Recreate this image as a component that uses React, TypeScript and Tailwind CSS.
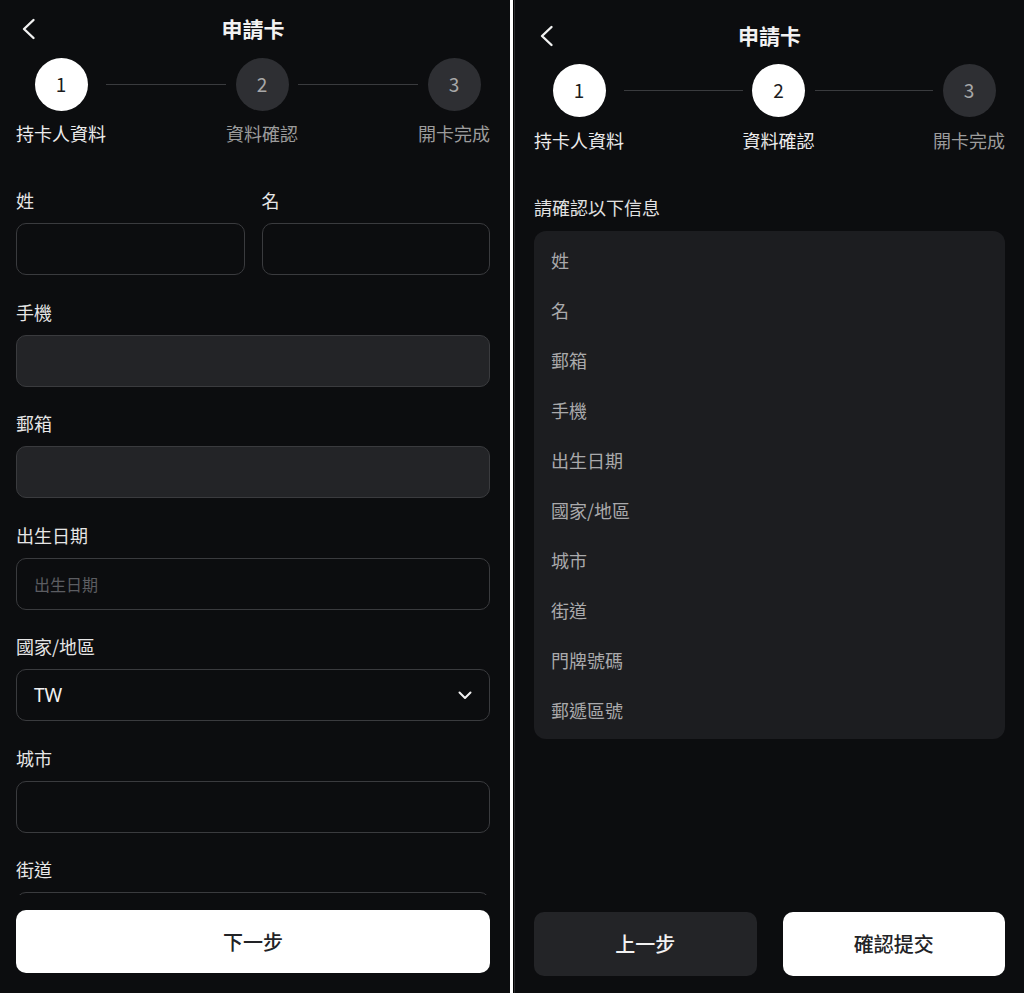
import React from "react";

const font = "font-['Noto_Sans_CJK_TC','Noto_Sans',sans-serif]";

type Step = { num: string; label: string; done: boolean };

function BackIcon() {
  return (
    <svg width="24" height="24" viewBox="0 0 24 24" fill="none">
      <polyline
        points="17.5,3 8,12 17.5,21"
        stroke="#f2f2f2"
        strokeWidth="2.4"
        strokeLinecap="round"
        strokeLinejoin="round"
      />
    </svg>
  );
}

function Header({ top }: { top: boolean }) {
  return (
    <div
      className={
        "grid grid-cols-[40px_1fr_40px] items-center " +
        (top ? "h-[58px]" : "mt-2 h-[56px]")
      }
    >
      <BackIcon />
      <h1 className="text-center text-[21px] font-bold text-[#f2f2f2]">申請卡</h1>
      <div />
    </div>
  );
}

function Stepper({ steps, labelGap }: { steps: Step[]; labelGap: string }) {
  return (
    <div className="flex items-start">
      {steps.map((s, i) => (
        <React.Fragment key={s.num}>
          {i > 0 && <div className="mt-[26px] h-px flex-1 bg-[#3a3b3e]" />}
          <div className="flex flex-col items-center">
            <div
              className={
                "flex h-[53px] w-[53px] items-center justify-center rounded-full text-[19px] " +
                (s.done ? "bg-white text-[#1c1c1e]" : "bg-[#2e2f33] text-[#a8a8a8]")
              }
            >
              {s.num}
            </div>
            <p
              className={
                labelGap +
                " whitespace-nowrap text-[18px] leading-[24px] " +
                (s.done ? "text-[#ececec]" : "text-[#9c9c9c]")
              }
            >
              {s.label}
            </p>
          </div>
        </React.Fragment>
      ))}
    </div>
  );
}

function Feld({
  label,
  filled,
  children,
}: {
  label: string;
  filled?: boolean;
  children?: React.ReactNode;
}) {
  return (
    <div>
      <p className="text-[18px] leading-[24px] text-[#e6e6e6]">{label}</p>
      <div
        className={
          "mt-[11px] flex h-[52px] items-center rounded-[10px] border px-[17px] " +
          (filled ? "border-[#3a3b3e] bg-[#232427]" : "border-[#3a3b3e] bg-transparent")
        }
      >
        {children}
      </div>
    </div>
  );
}

function FormPanel() {
  const steps: Step[] = [
    { num: "1", label: "持卡人資料", done: true },
    { num: "2", label: "資料確認", done: false },
    { num: "3", label: "開卡完成", done: false },
  ];

  return (
    <div className="flex h-full w-[510px] flex-col bg-[#0c0d0f] pl-4 pr-5">
      <Header top />
      <Stepper steps={steps} labelGap="mt-[10px]" />

      <div className="min-h-0 flex-1 overflow-hidden">
        <div className="flex flex-col gap-[24.5px] pt-[43px]">
          <div className="grid grid-cols-2 gap-[17px]">
            <Feld label="姓" />
            <Feld label="名" />
          </div>
          <Feld label="手機" filled />
          <Feld label="郵箱" filled />
          <Feld label="出生日期">
            <input
              className="w-full bg-transparent text-[16px] text-white outline-none placeholder:text-[#5c5d61]"
              placeholder="出生日期"
            />
          </Feld>
          <Feld label="國家/地區">
            <span className="flex-1 text-[19px] text-[#f2f2f2] font-['Noto_Sans','Roboto',sans-serif]">
              TW
            </span>
            <svg width="14" height="9" viewBox="0 0 14 9" fill="none">
              <polyline
                points="1.5,1.5 7,7 12.5,1.5"
                stroke="#f2f2f2"
                strokeWidth="2"
                strokeLinecap="round"
                strokeLinejoin="round"
              />
            </svg>
          </Feld>
          <Feld label="城市" />
          <Feld label="街道" />
        </div>
      </div>

      <div className="pb-5 pt-[15px]">
        <button className="h-[63px] w-full rounded-[10px] bg-white text-[20px] font-medium text-[#222326]">
          下一步
        </button>
      </div>
    </div>
  );
}

function ConfirmPanel() {
  const steps: Step[] = [
    { num: "1", label: "持卡人資料", done: true },
    { num: "2", label: "資料確認", done: true },
    { num: "3", label: "開卡完成", done: false },
  ];

  const felder = [
    "姓",
    "名",
    "郵箱",
    "手機",
    "出生日期",
    "國家/地區",
    "城市",
    "街道",
    "門牌號碼",
    "郵遞區號",
  ];

  return (
    <div className="flex h-full w-[510px] flex-col border-l border-[#2a2b2e] bg-[#0c0d0f] px-[19px]">
      <Header top={false} />
      <Stepper steps={steps} labelGap="mt-[11px]" />

      <p className="mt-[43px] text-[18px] leading-[24px] text-[#e2e2e2]">請確認以下信息</p>

      <div className="mt-3 rounded-[12px] bg-[#1c1d20] px-[17px] py-1">
        {felder.map((f) => (
          <div key={f} className="flex h-[50px] items-center text-[18px] text-[#a9a9ab]">
            {f}
          </div>
        ))}
      </div>

      <div className="flex-1" />

      <div className="flex gap-[26px] pb-[17px]">
        <button className="h-[64px] flex-1 rounded-[10px] bg-[#232427] text-[20px] font-medium text-[#f2f2f2]">
          上一步
        </button>
        <button className="h-[64px] flex-1 rounded-[10px] bg-white text-[20px] font-medium text-[#222326]">
          確認提交
        </button>
      </div>
    </div>
  );
}

export default function App() {
  return (
    <div className={"flex h-[993px] w-[1024px] overflow-hidden bg-black " + font}>
      <FormPanel />
      <div className="w-[3px] bg-white" />
      <div className="w-px bg-black" />
      <ConfirmPanel />
    </div>
  );
}
